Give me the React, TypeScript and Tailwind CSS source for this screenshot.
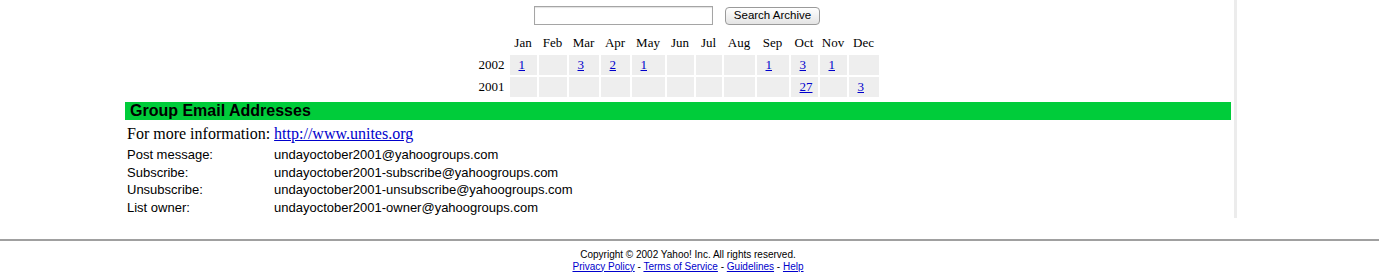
const months = ['Jan', 'Feb', 'Mar', 'Apr', 'May', 'Jun', 'Jul', 'Aug', 'Sep', 'Oct', 'Nov', 'Dec'];
const widths = ['w-[27px]', 'w-[28px]', 'w-[30px]', 'w-[29px]', 'w-[33px]', 'w-[27px]', 'w-[26px]', 'w-[31px]', 'w-[32px]', 'w-[27px]', 'w-[27px]', 'w-[30px]'];

const archive: { year: string; counts: (string | null)[] }[] = [
  { year: '2002', counts: ['1', null, '3', '2', '1', null, null, null, '1', '3', '1', null] },
  { year: '2001', counts: [null, null, null, null, null, null, null, null, null, '27', null, '3'] },
];

const emails = [
  { label: 'Post message:', value: 'undayoctober2001@yahoogroups.com' },
  { label: 'Subscribe:', value: 'undayoctober2001-subscribe@yahoogroups.com' },
  { label: 'Unsubscribe:', value: 'undayoctober2001-unsubscribe@yahoogroups.com' },
  { label: 'List owner:', value: 'undayoctober2001-owner@yahoogroups.com' },
];

const serif = "font-['Liberation_Serif',serif]";
const sans = "font-['Liberation_Sans',Arial,sans-serif]";

const SearchForm = () => (
  <div className="flex items-start justify-center gap-3 pt-[6px] pr-[2px]">
    <input type="text" className="w-[179px] h-[19px] border border-[#a5a5a5] bg-white shadow-[inset_0_1px_1px_rgba(0,0,0,0.12)] outline-none" />
    <button
      className={`mt-[1px] h-[18px] w-[95px] rounded-[4px] border border-[#9a9a9a] bg-gradient-to-b from-white to-[#e4e4e4] text-[11.5px] leading-none text-black ${sans}`}
    >
      Search Archive
    </button>
  </div>
);

const Calendar = () => (
  <div className="flex justify-center pt-[6px]">
    <table className={`table-fixed border-separate border-spacing-[2px] text-[13px] text-black ${serif}`}>
      <thead>
        <tr className="h-[20px]">
          <th className="w-[30px] p-0"></th>
          {months.map((m, i) => (
            <th key={m} className={`${widths[i]} p-0 font-normal text-center`}>
              {m}
            </th>
          ))}
        </tr>
      </thead>
      <tbody>
        {archive.map((row) => (
          <tr key={row.year} className="h-[20px]">
            <td className="p-0 pr-[3px] text-right">{row.year}</td>
            {row.counts.map((c, i) => (
              <td key={i} className="bg-[#eeeeee] p-0 pl-[9px] text-left">
                {c && (
                  <a href="#" className="text-[#0000cc] underline">
                    {c}
                  </a>
                )}
              </td>
            ))}
          </tr>
        ))}
      </tbody>
    </table>
  </div>
);

const GroupEmails = () => (
  <div className="mt-[3px]">
    <div className={`h-[18px] bg-[#00cc3a] pl-[5px] text-[16px] font-bold leading-[18px] text-black ${sans}`}>
      Group Email Addresses
    </div>
    <div className={`mt-[2px] h-[24px] pl-[2px] text-[16px] leading-[24px] text-black ${serif}`}>
      For more information:{' '}
      <a href="#" className="text-[#0000cc] underline">
        http://www.unites.org
      </a>
    </div>
    <div className={`pl-[2px] text-[13px] leading-[17.67px] text-black ${sans}`}>
      {emails.map((e) => (
        <div key={e.label} className="flex">
          <span className="w-[147px] shrink-0">{e.label}</span>
          <span>{e.value}</span>
        </div>
      ))}
    </div>
  </div>
);

export default function App() {
  return (
    <div className="w-[1385px] h-[276px] bg-white overflow-hidden">
      <div className="flex">
        <div className="w-[125px] shrink-0" />
        <div className="w-[1106px] shrink-0 pb-[1px]">
          <SearchForm />
          <Calendar />
          <GroupEmails />
        </div>
        <div className="ml-[3px] w-[3px] shrink-0 bg-[#ececec]" />
      </div>
      <div className="mt-[21px] w-[1379px] h-[2px] bg-[#a0a0a0]" />
      <div className={`w-[1379px] pt-[8px] pr-[3px] text-center text-[10px] leading-[12px] text-black ${sans}`}>
        <div>Copyright © 2002 Yahoo! Inc. All rights reserved.</div>
        <div>
          <a href="#" className="text-[#0000cc] underline">Privacy Policy</a> -{' '}
          <a href="#" className="text-[#0000cc] underline">Terms of Service</a> -{' '}
          <a href="#" className="text-[#0000cc] underline">Guidelines</a> -{' '}
          <a href="#" className="text-[#0000cc] underline">Help</a>
        </div>
      </div>
    </div>
  );
}
